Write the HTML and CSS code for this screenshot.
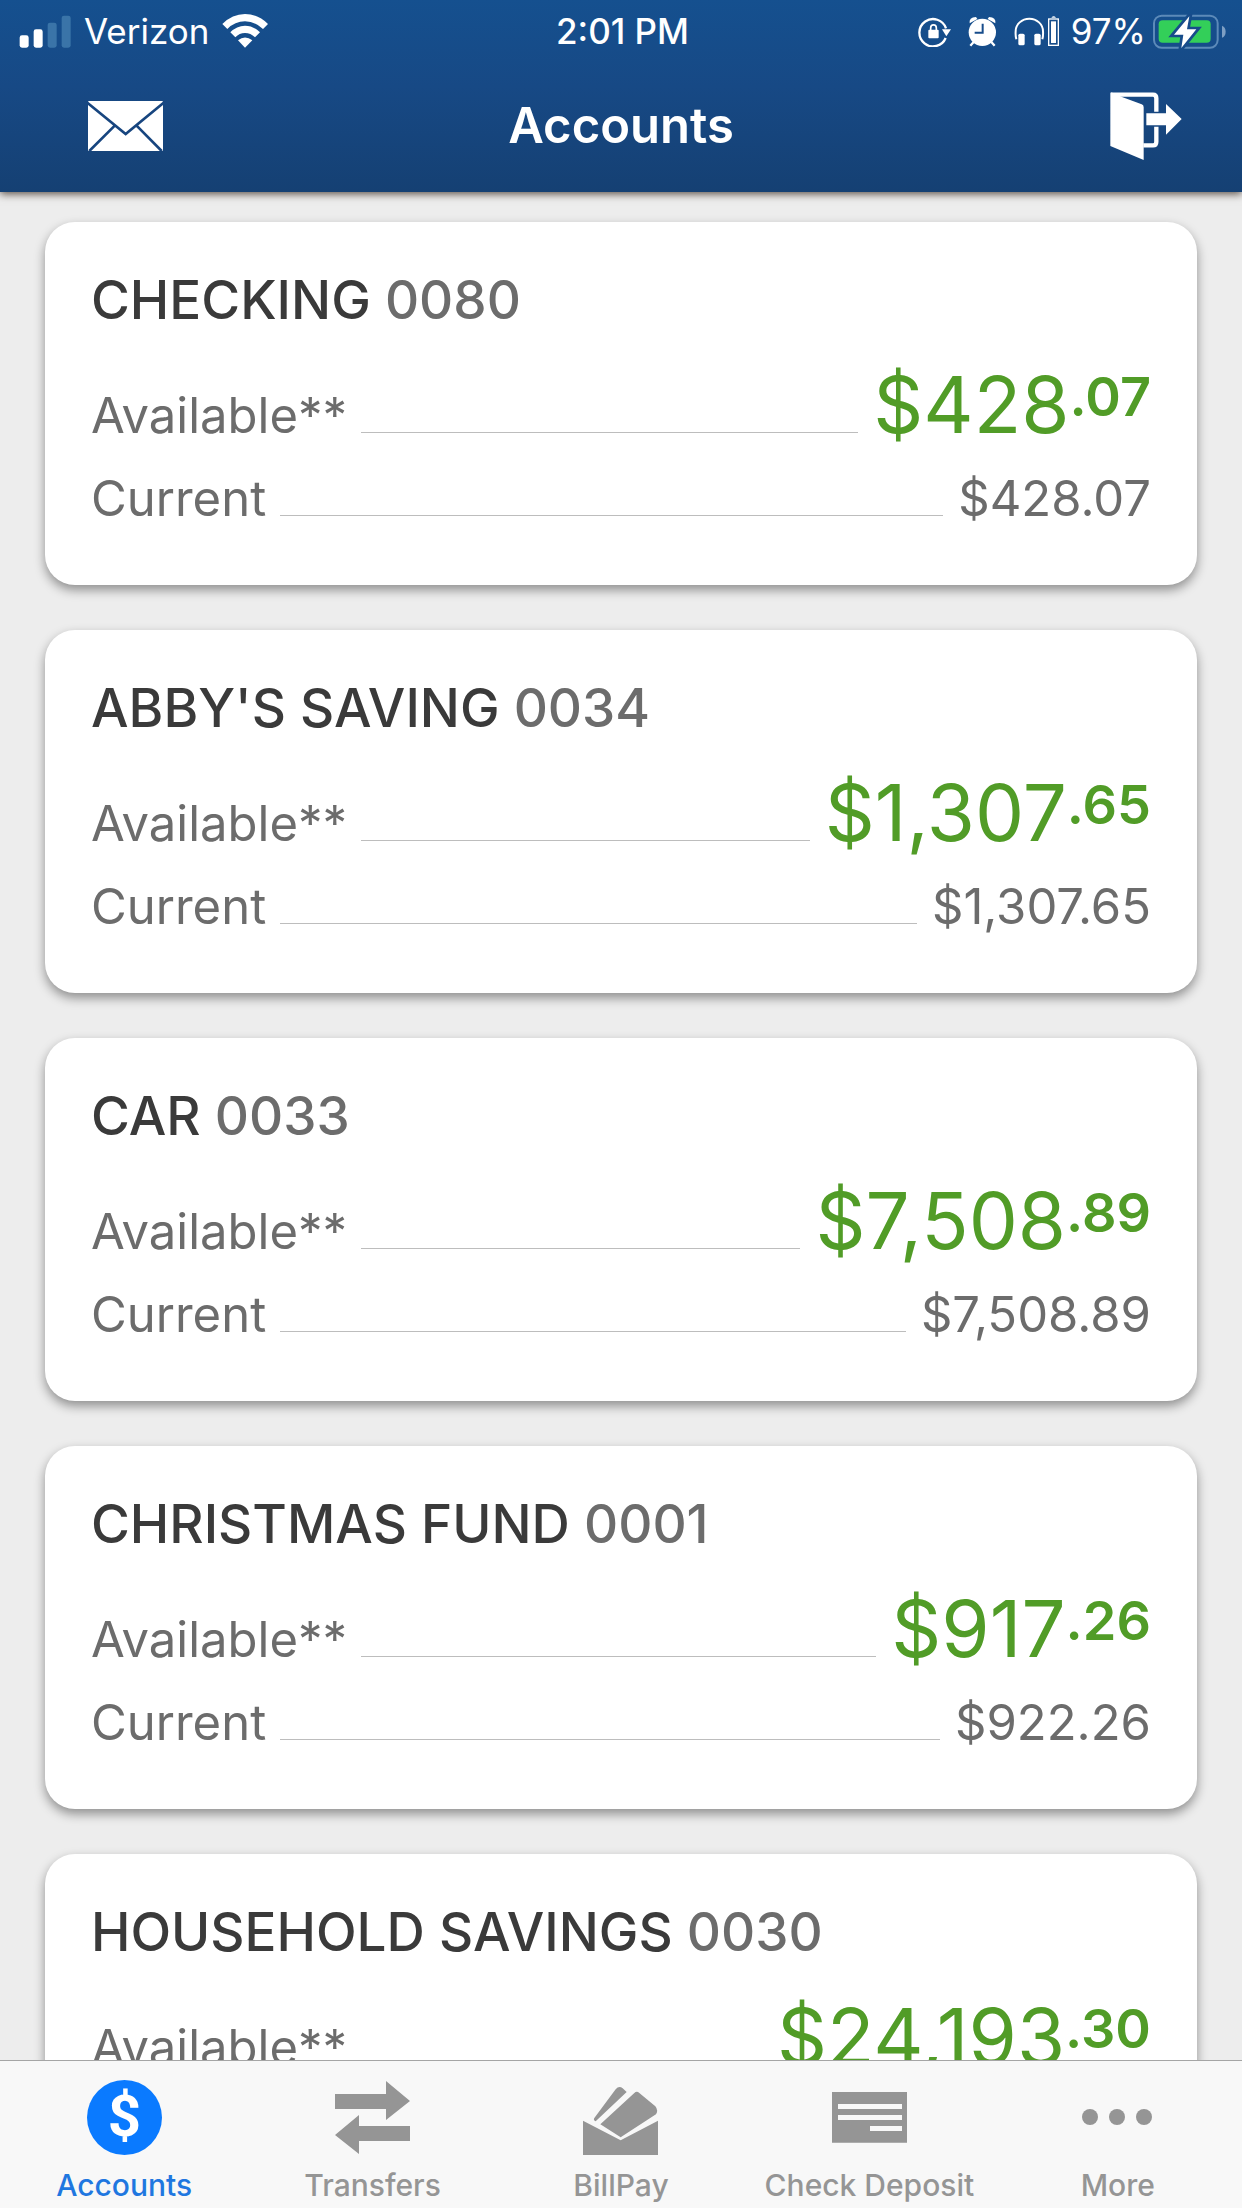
FILE: index.html
```html
<!DOCTYPE html>
<html lang="en">
<head>
<meta charset="utf-8">
<meta name="viewport" content="width=device-width, initial-scale=1">
<title>Accounts</title>
<link rel="stylesheet" href="styles.css">
</head>
<body>
<header class="top">
  <div class="status">
    <div class="status-left">
      <svg class="signal" viewBox="58 40 156 99" width="52" height="33" aria-hidden="true">
        <rect x="60" y="101" width="27" height="37" rx="7" fill="#fff"/>
        <rect x="102" y="83" width="27" height="55" rx="7" fill="#fff"/>
        <rect x="144" y="63" width="27" height="75" rx="7" fill="#3a74a8"/>
        <rect x="186" y="42" width="27" height="96" rx="7" fill="#3a74a8"/>
      </svg>
      <span class="carrier">Verizon</span>
      <svg class="wifi" viewBox="666 38 138 102" width="46" height="34" aria-hidden="true">
        <g fill="#fff">
          <path d="M667 68Q697 38 735 38T804 68L789 83Q765 60 735 60T682 83Z"/>
          <path d="M691 93Q710 73 735 73T780 93L765 108Q752 95 735 95T706 108Z"/>
          <path d="M714 117Q735 100 757 117L735 139Z"/>
        </g>
      </svg>
    </div>
    <time class="clock">2:01 PM</time>
    <div class="status-right">
      <svg class="lock" viewBox="243 47 99 93" width="33" height="31" aria-hidden="true">
        <path d="M327 84A41 41 0 1 0 326 113" fill="none" stroke="#fff" stroke-width="7"/>
        <path d="M315 87H342L328 108Z" fill="#fff"/>
        <rect x="274" y="88" width="31" height="26" rx="3" fill="#fff"/>
        <path d="M281 90V83a8 9 0 0 1 17 0V90" fill="none" stroke="#fff" stroke-width="5"/>
      </svg>
      <svg class="alarm" viewBox="393 45 87 93" width="29" height="31" aria-hidden="true">
        <circle cx="436" cy="94" r="41" fill="#fff"/>
        <path d="M398 67Q395 49 417 48L421 54ZM475 67Q478 49 456 48L452 54Z" fill="#fff"/>
        <path d="M410 123L400 134M463 123L473 134" stroke="#fff" stroke-width="7"/>
        <path d="M437 68V95H413" fill="none" stroke="#174c8b" stroke-width="6"/>
      </svg>
      <svg class="phones" viewBox="531 42 138 96" width="46" height="32" aria-hidden="true">
        <path d="M538 115Q535 105 536 91A41 38 0 0 1 618 91Q619 105 616 115" fill="none" stroke="#fff" stroke-width="6"/>
        <rect x="544" y="98" width="19" height="35" rx="5" fill="#fff"/>
        <rect x="592" y="98" width="19" height="35" rx="5" fill="#fff"/>
        <path d="M643 50Q650 42 657 50Z" fill="#fff"/>
        <rect x="635" y="54" width="29" height="79" fill="none" stroke="#fff" stroke-width="4"/>
        <rect x="642" y="61" width="15" height="65" fill="#fff"/>
      </svg>
      <span class="percent">97%</span>
      <svg class="battery" viewBox="940 37 219 105" width="73" height="35" aria-hidden="true">
        <rect x="943" y="42" width="191" height="96" rx="23" fill="none" stroke="#5c8ab9" stroke-width="6"/>
        <path d="M1147 72Q1158 76 1158 90T1147 108Z" fill="#7d9fc4"/>
        <rect x="957" y="56" width="156" height="67" rx="12" fill="#33cf59"/>
        <path d="M1049 44L1003 99H1031L1025 139L1070 83H1042Z" fill="#fff" stroke="#174c8b" stroke-width="16" paint-order="stroke"/>
      </svg>
    </div>
  </div>
  <div class="nav">
    <button class="icon-button messages" type="button" aria-label="Messages">
      <svg viewBox="0 0 225 150" width="75" height="50" aria-hidden="true">
        <rect width="225" height="150" rx="3" fill="#fff"/>
        <path d="M-2 5L113 99L227 5M81 73L4 150M145 73L221 150" fill="none" stroke="#17457f" stroke-width="8"/>
      </svg>
    </button>
    <h1 class="title">Accounts</h1>
    <button class="icon-button logout" type="button" aria-label="Log out">
      <svg viewBox="808 272 216 204" width="72" height="68" aria-hidden="true">
        <path d="M815 280H937Q947 280 947 291V331M947 376V421Q947 432 937 432H908" fill="none" stroke="#fff" stroke-width="13"/>
        <path d="M809 276Q809 273 813 273L846 288L903 309Q909 311 909 318V476L809 434ZM917 336H976V308L1023 353L976 400V372H917Z" fill="#fff"/>
      </svg>
    </button>
  </div>
</header>

<main class="accounts">
  <article class="card">
    <h2 class="name">CHECKING <span class="number">0080</span></h2>
    <dl class="balances">
      <div class="row available"><dt>Available**</dt><dd class="big">$428<span class="cents">.07</span></dd></div>
      <div class="row"><dt>Current</dt><dd>$428.07</dd></div>
    </dl>
  </article>
  <article class="card">
    <h2 class="name">ABBY'S SAVING <span class="number">0034</span></h2>
    <dl class="balances">
      <div class="row available"><dt>Available**</dt><dd class="big">$1,307<span class="cents">.65</span></dd></div>
      <div class="row"><dt>Current</dt><dd>$1,307.65</dd></div>
    </dl>
  </article>
  <article class="card">
    <h2 class="name">CAR <span class="number">0033</span></h2>
    <dl class="balances">
      <div class="row available"><dt>Available**</dt><dd class="big">$7,508<span class="cents">.89</span></dd></div>
      <div class="row"><dt>Current</dt><dd>$7,508.89</dd></div>
    </dl>
  </article>
  <article class="card">
    <h2 class="name">CHRISTMAS FUND <span class="number">0001</span></h2>
    <dl class="balances">
      <div class="row available"><dt>Available**</dt><dd class="big">$917<span class="cents">.26</span></dd></div>
      <div class="row"><dt>Current</dt><dd>$922.26</dd></div>
    </dl>
  </article>
  <article class="card">
    <h2 class="name">HOUSEHOLD SAVINGS <span class="number">0030</span></h2>
    <dl class="balances">
      <div class="row available"><dt>Available**</dt><dd class="big">$24,193<span class="cents">.30</span></dd></div>
    </dl>
  </article>
</main>

<nav class="tabs" aria-label="Main">
  <a class="tab active" href="#accounts" aria-current="page">
    <svg viewBox="0 0 75 75" width="75" height="75" aria-hidden="true">
      <circle cx="37.5" cy="37.5" r="37.5" fill="#0a7aff"/>
      <text class="coin" x="37.5" y="56" text-anchor="middle">$</text>
    </svg>
    <span>Accounts</span>
  </a>
  <a class="tab" href="#transfers">
    <svg viewBox="0 0 75 75" width="75" height="75" aria-hidden="true">
      <path d="M0 14H51V1L75 21L51 40V29H0ZM75 46H24V35L0 55L24 74V61H75Z" fill="#959595"/>
    </svg>
    <span>Transfers</span>
  </a>
  <a class="tab" href="#billpay">
    <svg viewBox="0 0 225 225" width="75" height="75" aria-hidden="true">
      <path d="M0 122L113 181L225 122V225H0Z" fill="#959595"/>
      <path d="M38 124Q30 122 34 114L98 28Q108 16 119 25L131 36ZM52 133L154 39Q161 32 169 39L217 79Q227 91 219 103L113 172Z" fill="#959595"/>
    </svg>
    <span>BillPay</span>
  </a>
  <a class="tab" href="#deposit">
    <svg viewBox="0 0 225 225" width="75" height="75" aria-hidden="true">
      <path d="M0 36H225V188H0Z" fill="#959595"/>
      <path d="M18 72H210V87H18ZM18 105H210V120H18ZM114 138H210V153H114Z" fill="#f8f8f8"/>
    </svg>
    <span>Check Deposit</span>
  </a>
  <a class="tab" href="#more">
    <svg viewBox="0 0 75 75" width="75" height="75" aria-hidden="true">
      <g fill="#959595"><circle cx="10" cy="37" r="8"/><circle cx="37" cy="37" r="8"/><circle cx="64" cy="37" r="8"/></g>
    </svg>
    <span>More</span>
  </a>
</nav>
</body>
</html>
```
FILE: styles.css
```css
* {
  box-sizing: border-box;
}

body {
  margin: 0;
  height: 100vh;
  display: flex;
  flex-direction: column;
  background: #ededed;
  color: #6c6c6c;
  font-family: Inter, "Liberation Sans", sans-serif;
}

svg {
  display: block;
  flex: none;
}

/* Header */
.top {
  position: relative;
  flex: none;
  color: #fff;
  background: linear-gradient(#15508f, #174985 45%, #154073);
  box-shadow: 0 2px 8px rgba(40, 25, 15, 0.75);
}

.status {
  display: grid;
  grid-template-columns: 1fr auto 1fr;
  align-items: center;
  height: 60px;
  padding: 2px 16px 0 19px;
  font-size: 35px;
  line-height: 44px;
}

.status-left,
.status-right {
  display: flex;
  align-items: center;
}

.status-left {
  gap: 13px;
}

.status-right {
  justify-content: flex-end;
  gap: 17px;
}

.percent {
  margin: 0 -10px 0 -6px;
}

.clock {
  font-weight: 500;
}

.nav {
  display: grid;
  grid-template-columns: 1fr auto 1fr;
  align-items: center;
  height: 132px;
}

.icon-button {
  padding: 0;
  border: 0;
  background: none;
}

.messages {
  justify-self: start;
  margin-left: 88px;
}

.logout {
  justify-self: end;
  margin-right: 60px;
}

.title {
  margin: 0;
  font-size: 49px;
  line-height: 60px;
  font-weight: 600;
}

/* Account list */
.accounts {
  flex: 1;
  min-height: 0;
  overflow-y: auto;
  scrollbar-width: none;
  display: flex;
  flex-direction: column;
  gap: 45px;
  padding: 30px 45px;
}

.card {
  flex: none;
  padding: 46px 46px 45px;
  border-radius: 30px;
  background: #fff;
  box-shadow: 0 5px 11px rgba(0, 0, 0, 0.4);
}

.name {
  margin: 0;
  color: #3a3a3a;
  font-size: 53px;
  line-height: 64px;
  font-weight: 500;
}

.number {
  color: #6c6c6c;
}

.balances {
  margin: 0;
}

.row {
  display: flex;
  align-items: baseline;
  gap: 15px;
  font-size: 49px;
  line-height: 83px;
}

.row dt {
  flex: 1;
  display: flex;
  align-items: baseline;
  gap: 14px;
}

.row dt::after {
  content: "";
  flex: 1;
  border-bottom: 1px solid #bdbdbd;
}

.row dd {
  margin: 0;
}

.available {
  padding-top: 31px;
}

.row .big {
  color: #519c27;
  font-size: 78px;
}

.cents {
  font-size: 54px;
  font-weight: 600;
  line-height: 1;
  vertical-align: 17px;
}

/* Tab bar */
.tabs {
  position: relative;
  flex: none;
  display: grid;
  grid-template-columns: repeat(5, 1fr);
  height: 148px;
  padding-top: 19px;
  border-top: 1px solid #a5a5a5;
  background: #f8f8f8;
}

.tab {
  display: flex;
  flex-direction: column;
  align-items: center;
  gap: 12px;
  color: #959595;
  font-size: 30px;
  line-height: 36px;
  font-weight: 500;
  text-decoration: none;
  white-space: nowrap;
}

.active {
  color: #1f77e0;
}

.coin {
  fill: #fff;
  font-family: Roboto, sans-serif;
  font-size: 58px;
  font-weight: 700;
}
```
